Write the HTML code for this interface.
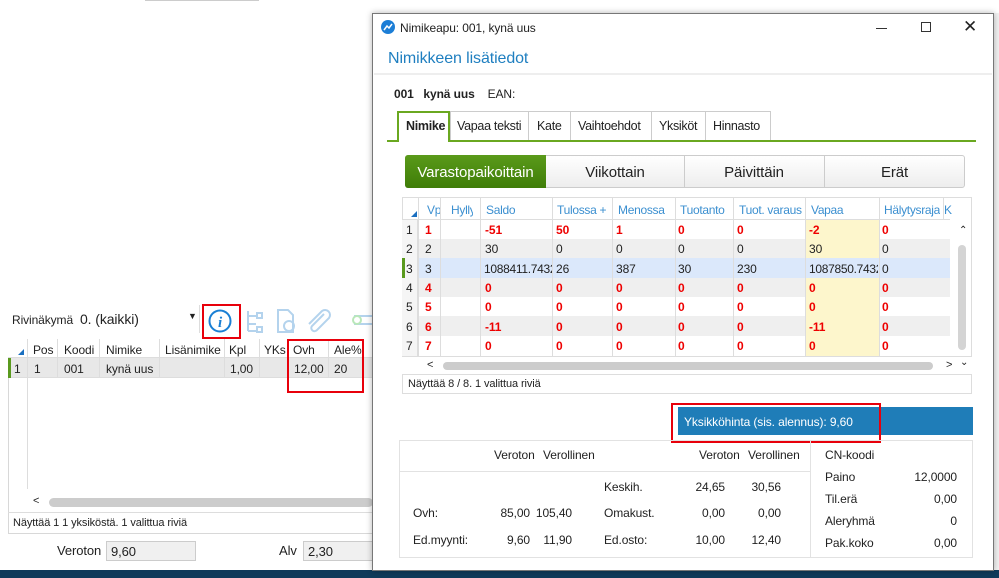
<!DOCTYPE html>
<html><head><meta charset="utf-8"><style>
*{box-sizing:border-box;margin:0;padding:0}
body{width:999px;height:578px;overflow:hidden;background:#fff;font-family:"Liberation Sans",sans-serif;font-size:12px;color:#222;position:relative;letter-spacing:-0.1px}
.a{position:absolute}
.t{position:absolute;white-space:nowrap}
.red{color:#e00;font-weight:bold}
.rb{position:absolute;border:2.5px solid #e8000b}
.tab{position:absolute;top:119px;font-size:12.5px;letter-spacing:-0.3px;white-space:nowrap}
</style></head><body>
<div class="a" style="left:145px;top:0;width:114px;height:1px;background:#ccc"></div>
<div class="t" style="left:12px;top:313px;font-size:12px">Rivinäkymä</div>
<div class="t" style="left:80px;top:311px;font-size:14px">0. (kaikki)</div>
<div class="t" style="left:188px;top:311px;font-size:9px">▼</div>
<div class="a" style="left:199px;top:305px;width:1px;height:28px;background:#ddd"></div>
<svg class="a" style="left:207px;top:308px" width="26" height="26"><circle cx="13" cy="13" r="10.5" fill="none" stroke="#1a7fd4" stroke-width="2"/><text x="13" y="19" font-family="Liberation Serif" font-style="italic" font-weight="bold" font-size="15" fill="#1a7fd4" text-anchor="middle">i</text></svg>
<div class="rb" style="left:202px;top:304px;width:39px;height:35px"></div>
<svg class="a" style="left:244px;top:308px" width="130" height="26" opacity=".45"><g fill="none" stroke="#5aa0d8" stroke-width="2"><path d="M4 3v20M4 8h8M4 16h8M4 23h8"/><rect x="13" y="5" width="5" height="5"/><rect x="13" y="19" width="5" height="5"/><path d="M34 2h10l5 5v17H34z"/><circle cx="45" cy="18" r="5"/><path d="M80 6l-12 12a3 3 0 0 0 5 4l12-12a5 5 0 0 0-7-7L65 16"/><path d="M110 8h20M110 16h20"/><circle cx="113" cy="12" r="4" stroke="#6c6"/></g></svg>
<div class="a" style="left:8px;top:339px;width:365px;height:195px;border:1px solid #d8d8d8"></div>
<div class="a" style="left:8px;top:339px;width:365px;height:19px;background:#fff;border-bottom:1px solid #ddd"></div>
<div class="a" style="left:8px;top:358px;width:365px;height:20px;background:#e8e8e8;border-bottom:1px solid #ddd"></div>
<div class="a" style="left:8px;top:358px;width:3px;height:20px;background:#5a9a1e"></div>
<div class="a" style="left:27px;top:339px;width:1px;height:150px;background:#ddd"></div>
<svg class="a" style="left:18px;top:349px" width="6" height="6"><path d="M6 0V6H0z" fill="#1a6fc0"/></svg>
<div class="t" style="left:14px;top:362px">1</div>
<div class="t" style="left:33px;top:343px">Pos</div><div class="t" style="left:34px;top:362px">1</div>
<div class="t" style="left:64px;top:343px">Koodi</div><div class="t" style="left:64px;top:362px">001</div>
<div class="t" style="left:106px;top:343px">Nimike</div><div class="t" style="left:106px;top:362px">kynä uus</div>
<div class="t" style="left:165px;top:343px">Lisänimike</div>
<div class="t" style="left:229px;top:343px">Kpl</div><div class="t" style="left:230px;top:362px">1,00</div>
<div class="t" style="left:264px;top:343px">YKs</div>
<div class="t" style="left:293px;top:343px">Ovh</div><div class="t" style="left:294px;top:362px">12,00</div>
<div class="t" style="left:334px;top:343px">Ale%</div><div class="t" style="left:334px;top:362px">20</div>
<div class="a" style="left:57px;top:339px;width:1px;height:39px;background:#ddd"></div>
<div class="a" style="left:99px;top:339px;width:1px;height:39px;background:#ddd"></div>
<div class="a" style="left:159px;top:339px;width:1px;height:39px;background:#ddd"></div>
<div class="a" style="left:224px;top:339px;width:1px;height:39px;background:#ddd"></div>
<div class="a" style="left:259px;top:339px;width:1px;height:39px;background:#ddd"></div>
<div class="a" style="left:288px;top:339px;width:1px;height:39px;background:#ddd"></div>
<div class="a" style="left:328px;top:339px;width:1px;height:39px;background:#ddd"></div>
<div class="rb" style="left:287px;top:339px;width:77px;height:54px"></div>
<div class="t" style="left:33px;top:495px;font-size:11px">&lt;</div>
<div class="a" style="left:49px;top:498px;width:324px;height:9px;background:#ccc;border-radius:5px"></div>
<div class="a" style="left:8px;top:512px;width:365px;height:1px;background:#ddd"></div>
<div class="t" style="left:13px;top:517px;font-size:11px">Näyttää 1 1 yksiköstä. 1 valittua riviä</div>
<div class="t" style="left:57px;top:543px;font-size:13px">Veroton</div>
<div class="a" style="left:106px;top:541px;width:90px;height:20px;background:#f0f0f0;border:1px solid #ccc"></div>
<div class="t" style="left:111px;top:544px;font-size:13px">9,60</div>
<div class="t" style="left:279px;top:543px;font-size:13px">Alv</div>
<div class="a" style="left:303px;top:541px;width:70px;height:20px;background:#f0f0f0;border:1px solid #ccc"></div>
<div class="t" style="left:308px;top:544px;font-size:13px">2,30</div>
<div class="a" style="left:0;top:570px;width:999px;height:8px;background:#0f3a5a"></div>
<div class="a" style="left:993px;top:13px;width:6px;height:557px;background:#f2f2f2"></div>
<!-- dialog -->
<div class="a" style="left:372px;top:13px;width:622px;height:558px;background:#fff;border:1px solid #777;box-shadow:0 0 6px rgba(0,0,0,.3)"></div>
<svg class="a" style="left:381px;top:20px" width="14" height="14"><circle cx="7" cy="7" r="7" fill="#1c7ed6"/><path d="M3 10l3-4 2 2 3-4" stroke="#fff" stroke-width="1.5" fill="none"/></svg>
<div class="t" style="left:400px;top:21px;font-size:12px">Nimikeapu: 001, kynä uus</div>
<div class="a" style="left:876px;top:28px;width:11px;height:1px;background:#333"></div>
<div class="a" style="left:921px;top:22px;width:10px;height:10px;border:1px solid #333"></div>
<div class="t" style="left:963px;top:17px;font-size:17px;font-weight:300">✕</div>
<div class="t" style="left:388px;top:50px;font-size:16px;color:#1f7fc0">Nimikkeen lisätiedot</div>
<div class="a" style="left:374px;top:73px;width:618px;height:2px;background:#eee"></div>
<div class="t" style="left:394px;top:87px;font-weight:bold">001&nbsp;&nbsp; kynä uus&nbsp;&nbsp;&nbsp; <span style="font-weight:normal">EAN:</span></div>
<div class="a" style="left:387px;top:140px;width:589px;height:2px;background:#6aa820"></div>
<div class="a" style="left:397px;top:111px;width:53px;height:31px;border:2px solid #6aa820;border-bottom:none;background:#fff"></div>
<div class="tab" style="left:406px;font-weight:bold">Nimike</div>
<div class="a" style="left:450px;top:111px;width:321px;height:29px;border:1px solid #ccc;border-bottom:none"></div>
<div class="a" style="left:528px;top:111px;width:1px;height:29px;background:#ccc"></div>
<div class="a" style="left:570px;top:111px;width:1px;height:29px;background:#ccc"></div>
<div class="a" style="left:651px;top:111px;width:1px;height:29px;background:#ccc"></div>
<div class="a" style="left:705px;top:111px;width:1px;height:29px;background:#ccc"></div>
<div class="tab" style="left:457px">Vapaa teksti</div>
<div class="tab" style="left:537px">Kate</div>
<div class="tab" style="left:578px">Vaihtoehdot</div>
<div class="tab" style="left:659px">Yksiköt</div>
<div class="tab" style="left:713px">Hinnasto</div>
<div class="a" style="left:405px;top:155px;width:560px;height:33px;border:1px solid #ccc;border-radius:3px;background:linear-gradient(#fff,#ededed)"></div>
<div class="a" style="left:405px;top:155px;width:141px;height:33px;border-radius:3px 0 0 3px;background:linear-gradient(#5a9a1a,#3f7d08)"></div>
<div class="a" style="left:684px;top:156px;width:1px;height:31px;background:#ccc"></div>
<div class="a" style="left:824px;top:156px;width:1px;height:31px;background:#ccc"></div>
<div class="t" style="left:405px;top:164px;width:141px;text-align:center;font-size:15px;color:#fff">Varastopaikoittain</div>
<div class="t" style="left:546px;top:164px;width:138px;text-align:center;font-size:15px">Viikottain</div>
<div class="t" style="left:684px;top:164px;width:140px;text-align:center;font-size:15px">Päivittäin</div>
<div class="t" style="left:824px;top:164px;width:141px;text-align:center;font-size:15px">Erät</div>
<div class="a" style="left:402px;top:197px;width:570px;height:197px;border:1px solid #ddd"></div>
<div class="a" style="left:418px;top:219px;width:532px;height:19px;background:#fff"></div>
<div class="a" style="left:418px;top:239px;width:532px;height:19px;background:#efefef"></div>
<div class="a" style="left:418px;top:258px;width:532px;height:20px;background:#dbe8fb"></div>
<div class="a" style="left:418px;top:278px;width:532px;height:19px;background:#efefef"></div>
<div class="a" style="left:418px;top:316px;width:532px;height:20px;background:#efefef"></div>
<div class="a" style="left:805px;top:219px;width:74px;height:137px;background:#fdf6cc"></div>
<div class="a" style="left:805px;top:258px;width:74px;height:20px;background:#dbe8fb"></div>
<div class="a" style="left:402px;top:219px;width:16px;height:137px;background:#f5f5f5;border-right:1px solid #ddd"></div>
<div class="a" style="left:402px;top:258px;width:3px;height:20px;background:#5a9a1e"></div>
<div class="a" style="left:402px;top:219px;width:548px;height:1px;background:#ddd"></div>
<svg class="a" style="left:411px;top:211px" width="6" height="6"><path d="M6 0V6H0z" fill="#1a6fc0"/></svg>
<div style="position:absolute;left:0;top:0;color:#3b8fd0;letter-spacing:-0.3px">
<div class="t" style="left:427px;top:203px;width:13px;overflow:hidden">Vp</div><div class="t" style="left:451px;top:203px;width:22px;overflow:hidden">Hylly</div><div class="t" style="left:486px;top:203px">Saldo</div><div class="t" style="left:557px;top:203px">Tulossa +</div><div class="t" style="left:618px;top:203px;width:52px;overflow:hidden">Menossa</div><div class="t" style="left:680px;top:203px;width:50px;overflow:hidden">Tuotanto</div><div class="t" style="left:739px;top:203px;width:64px;overflow:hidden">Tuot. varaus</div><div class="t" style="left:811px;top:203px">Vapaa</div><div class="t" style="left:884px;top:203px;width:56px;overflow:hidden">Hälytysraja</div><div class="t" style="left:944px;top:203px">K</div>
</div>
<div class="a" style="left:418px;top:197px;width:1px;height:159px;background:#ddd"></div>
<div class="a" style="left:440px;top:197px;width:1px;height:159px;background:#ddd"></div>
<div class="a" style="left:480px;top:197px;width:1px;height:159px;background:#ddd"></div>
<div class="a" style="left:552px;top:197px;width:1px;height:159px;background:#ddd"></div>
<div class="a" style="left:612px;top:197px;width:1px;height:159px;background:#ddd"></div>
<div class="a" style="left:675px;top:197px;width:1px;height:159px;background:#ddd"></div>
<div class="a" style="left:733px;top:197px;width:1px;height:159px;background:#ddd"></div>
<div class="a" style="left:805px;top:197px;width:1px;height:159px;background:#ddd"></div>
<div class="a" style="left:879px;top:197px;width:1px;height:159px;background:#ddd"></div>
<div class="a" style="left:943px;top:197px;width:1px;height:22px;background:#ddd"></div>
<div class="t" style="left:406px;top:223px">1</div><div class="t" style="left:406px;top:242px">2</div><div class="t" style="left:406px;top:262px">3</div><div class="t" style="left:406px;top:281px">4</div><div class="t" style="left:406px;top:300px">5</div><div class="t" style="left:406px;top:320px">6</div><div class="t" style="left:406px;top:339px">7</div>
<div class="red">
<div class="t" style="left:425px;top:223px">1</div><div class="t" style="left:485px;top:223px">-51</div><div class="t" style="left:556px;top:223px">50</div><div class="t" style="left:616px;top:223px">1</div><div class="t" style="left:678px;top:223px">0</div><div class="t" style="left:737px;top:223px">0</div><div class="t" style="left:809px;top:223px">-2</div><div class="t" style="left:882px;top:223px">0</div>
</div>
<div class="t" style="left:425px;top:242px">2</div><div class="t" style="left:485px;top:242px">30</div><div class="t" style="left:556px;top:242px">0</div><div class="t" style="left:616px;top:242px">0</div><div class="t" style="left:678px;top:242px">0</div><div class="t" style="left:737px;top:242px">0</div><div class="t" style="left:809px;top:242px">30</div><div class="t" style="left:882px;top:242px">0</div>
<div class="t" style="left:484px;top:262px;width:68px;overflow:hidden;letter-spacing:-0.3px">1088411.7432</div><div class="t" style="left:425px;top:262px">3</div><div class="t" style="left:556px;top:262px">26</div><div class="t" style="left:616px;top:262px">387</div><div class="t" style="left:678px;top:262px">30</div><div class="t" style="left:737px;top:262px">230</div><div class="t" style="left:809px;top:262px;width:69px;overflow:hidden;letter-spacing:-0.3px">1087850.7432</div><div class="t" style="left:882px;top:262px">0</div>
<div class="red">
<div class="t" style="left:425px;top:281px">4</div><div class="t" style="left:485px;top:281px">0</div><div class="t" style="left:556px;top:281px">0</div><div class="t" style="left:616px;top:281px">0</div><div class="t" style="left:678px;top:281px">0</div><div class="t" style="left:737px;top:281px">0</div><div class="t" style="left:809px;top:281px">0</div><div class="t" style="left:882px;top:281px">0</div>
<div class="t" style="left:425px;top:300px">5</div><div class="t" style="left:485px;top:300px">0</div><div class="t" style="left:556px;top:300px">0</div><div class="t" style="left:616px;top:300px">0</div><div class="t" style="left:678px;top:300px">0</div><div class="t" style="left:737px;top:300px">0</div><div class="t" style="left:809px;top:300px">0</div><div class="t" style="left:882px;top:300px">0</div>
<div class="t" style="left:425px;top:320px">6</div><div class="t" style="left:485px;top:320px">-11</div><div class="t" style="left:556px;top:320px">0</div><div class="t" style="left:616px;top:320px">0</div><div class="t" style="left:678px;top:320px">0</div><div class="t" style="left:737px;top:320px">0</div><div class="t" style="left:809px;top:320px">-11</div><div class="t" style="left:882px;top:320px">0</div>
<div class="t" style="left:425px;top:339px">7</div><div class="t" style="left:485px;top:339px">0</div><div class="t" style="left:556px;top:339px">0</div><div class="t" style="left:616px;top:339px">0</div><div class="t" style="left:678px;top:339px">0</div><div class="t" style="left:737px;top:339px">0</div><div class="t" style="left:809px;top:339px">0</div><div class="t" style="left:882px;top:339px">0</div>
</div>
<div class="a" style="left:402px;top:356px;width:570px;height:18px;background:#fff;border-top:1px solid #ddd"></div>
<div class="t" style="left:427px;top:359px;font-size:11px">&lt;</div>
<div class="a" style="left:443px;top:362px;width:490px;height:8px;background:#ccc;border-radius:4px"></div>
<div class="t" style="left:946px;top:359px;font-size:11px">&gt;</div>
<div class="t" style="left:960px;top:357px;font-size:10px">⌄</div>
<div class="t" style="left:959px;top:225px;font-size:10px">⌃</div>
<div class="a" style="left:958px;top:245px;width:8px;height:105px;background:#d4d4d4;border-radius:4px"></div>
<div class="a" style="left:402px;top:374px;width:570px;height:1px;background:#ddd"></div>
<div class="t" style="left:408px;top:378px;font-size:11px">Näyttää 8 / 8. 1 valittua riviä</div>
<div class="a" style="left:678px;top:407px;width:295px;height:28px;background:#1f7db8"></div>
<div class="t" style="left:684px;top:415px;color:#fff">Yksikköhinta (sis. alennus): 9,60</div>
<div class="rb" style="left:671px;top:403px;width:210px;height:40px"></div>
<div class="a" style="left:399px;top:440px;width:574px;height:118px;border:1px solid #e2e2e2"></div>
<div class="a" style="left:810px;top:440px;width:1px;height:118px;background:#e2e2e2"></div>
<div class="a" style="left:399px;top:471px;width:411px;height:1px;background:#e2e2e2"></div>
<div style="font-size:12px">
<div class="t" style="left:494px;top:448px">Veroton</div><div class="t" style="left:543px;top:448px">Verollinen</div>
<div class="t" style="left:699px;top:448px">Veroton</div><div class="t" style="left:748px;top:448px">Verollinen</div>
<div class="t" style="left:825px;top:448px">CN-koodi</div>
<div class="t" style="left:604px;top:480px">Keskih.</div><div class="t" style="left:670px;top:480px;width:55px;text-align:right">24,65</div><div class="t" style="left:726px;top:480px;width:55px;text-align:right">30,56</div>
<div class="t" style="left:413px;top:506px">Ovh:</div><div class="t" style="left:475px;top:506px;width:55px;text-align:right">85,00</div><div class="t" style="left:517px;top:506px;width:55px;text-align:right">105,40</div>
<div class="t" style="left:604px;top:506px">Omakust.</div><div class="t" style="left:670px;top:506px;width:55px;text-align:right">0,00</div><div class="t" style="left:726px;top:506px;width:55px;text-align:right">0,00</div>
<div class="t" style="left:413px;top:533px">Ed.myynti:</div><div class="t" style="left:475px;top:533px;width:55px;text-align:right">9,60</div><div class="t" style="left:517px;top:533px;width:55px;text-align:right">11,90</div>
<div class="t" style="left:604px;top:533px">Ed.osto:</div><div class="t" style="left:670px;top:533px;width:55px;text-align:right">10,00</div><div class="t" style="left:726px;top:533px;width:55px;text-align:right">12,40</div>
<div class="t" style="left:825px;top:470px">Paino</div><div class="t" style="left:880px;top:470px;width:77px;text-align:right">12,0000</div>
<div class="t" style="left:825px;top:492px">Til.erä</div><div class="t" style="left:880px;top:492px;width:77px;text-align:right">0,00</div>
<div class="t" style="left:825px;top:514px">Aleryhmä</div><div class="t" style="left:880px;top:514px;width:77px;text-align:right">0</div>
<div class="t" style="left:825px;top:536px">Pak.koko</div><div class="t" style="left:880px;top:536px;width:77px;text-align:right">0,00</div>
</div>
</body></html>
